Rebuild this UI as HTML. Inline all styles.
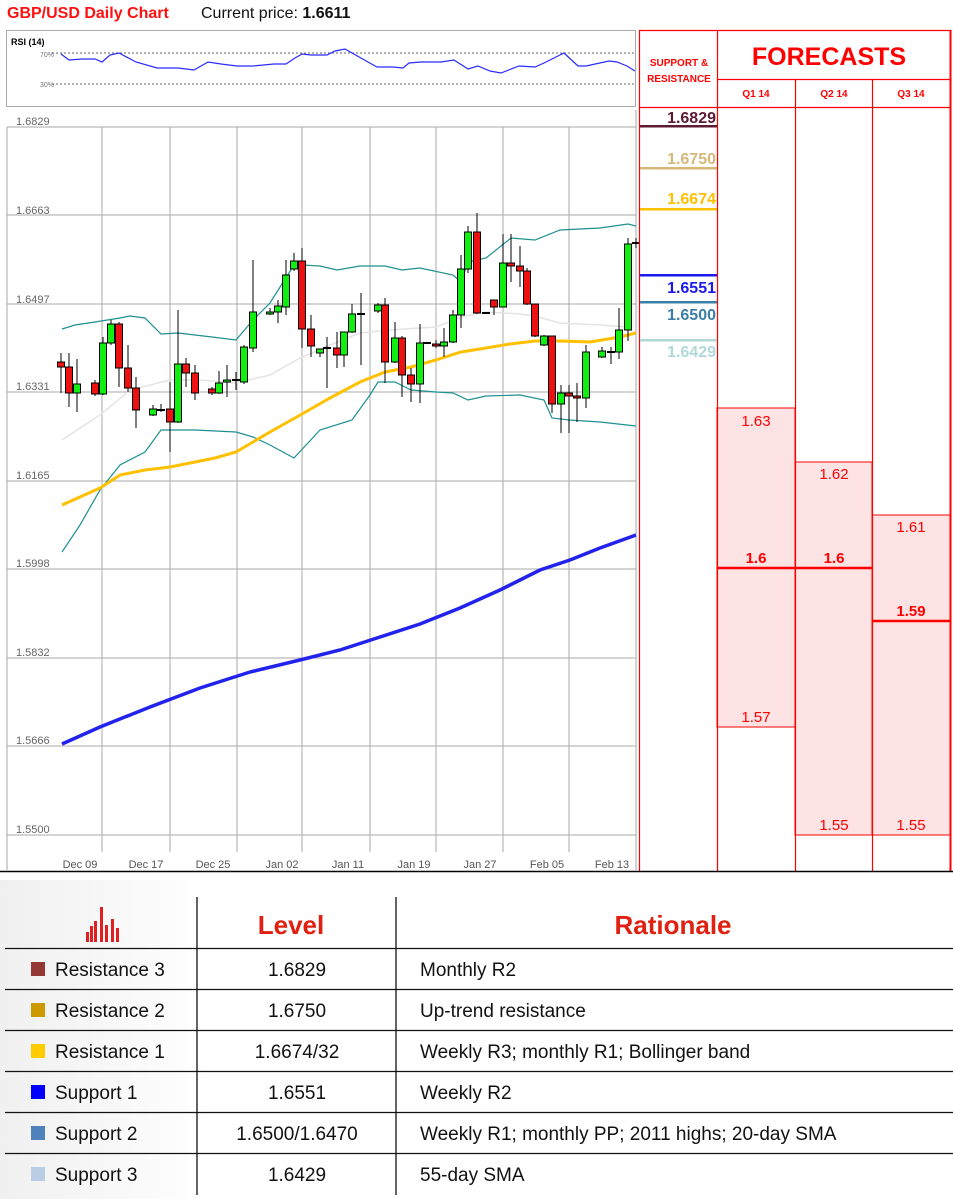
<!DOCTYPE html>
<html><head><meta charset="utf-8"><style>
body{margin:0;width:953px;height:1199px;background:#fff;position:relative;overflow:hidden;font-family:"Liberation Sans",sans-serif}
.a{position:absolute}
</style></head><body>
<div class="a" style="left:7px;top:5px;font-size:16px;font-weight:bold;color:#ff1010">GBP/USD Daily Chart</div>
<div class="a" style="left:201px;top:5px;font-size:16px;color:#111">Current price: <b>1.6611</b></div>

<svg class="a" style="left:0;top:0" width="640" height="880">
<rect x="6.5" y="30.5" width="629" height="76" fill="#fff" stroke="#aaa"/>
<text x="11" y="45" font-size="9" font-weight="bold" font-family="Liberation Sans">RSI (14)</text>
<text x="40" y="57" font-size="7" fill="#777" font-family="Liberation Sans">70%</text>
<text x="40" y="87" font-size="7" fill="#777" font-family="Liberation Sans">30%</text>
<line x1="52" y1="53" x2="635" y2="53" stroke="#666" stroke-dasharray="2,2"/>
<line x1="52" y1="84" x2="635" y2="84" stroke="#666" stroke-dasharray="2,2"/>
<polyline fill="none" stroke="#2a2aff" stroke-width="1.2" points="61,54 69,60 82,59 95,59 102,62 110,55 119,53 136,62 157,68 178,68 194,70 208,62 221,64 237,66 253,66 274,64 286,64 295,58 302,54 311,55 327,55 335,51 345,49 368,62 377,67 386,67 393,67 403,68 409,63 421,62 441,62 454,60 468,69 478,66 490,71 501,73 519,66 535,67 544,63 554,58 564,53 578,66 586,66 609,61 617,62 627,66 635,71"/>
<g font-family="Liberation Sans" font-size="11" fill="#666">
<text x="16" y="125">1.6829</text><text x="16" y="214">1.6663</text><text x="16" y="303">1.6497</text><text x="16" y="390">1.6331</text><text x="16" y="479">1.6165</text><text x="16" y="567">1.5998</text><text x="16" y="656">1.5832</text><text x="16" y="744">1.5666</text><text x="16" y="833">1.5500</text>
</g>
<g stroke="#aaa" stroke-width="1">
<line x1="7" y1="127" x2="636" y2="127"/><line x1="7" y1="215" x2="636" y2="215"/><line x1="7" y1="304" x2="636" y2="304"/><line x1="7" y1="392" x2="636" y2="392"/><line x1="7" y1="481" x2="636" y2="481"/><line x1="7" y1="569" x2="636" y2="569"/><line x1="7" y1="658" x2="636" y2="658"/><line x1="7" y1="746" x2="636" y2="746"/><line x1="7" y1="835" x2="636" y2="835"/>
<line x1="7" y1="127" x2="7" y2="870"/><line x1="636" y1="110" x2="636" y2="870"/>
<line x1="102" y1="127" x2="102" y2="852"/><line x1="170" y1="127" x2="170" y2="852"/><line x1="237" y1="127" x2="237" y2="852"/><line x1="302" y1="127" x2="302" y2="852"/><line x1="370" y1="127" x2="370" y2="852"/><line x1="436" y1="127" x2="436" y2="852"/><line x1="503" y1="127" x2="503" y2="852"/><line x1="569" y1="127" x2="569" y2="852"/>
</g>
<g font-family="Liberation Sans" font-size="11" fill="#555" text-anchor="middle">
<text x="80" y="868">Dec 09</text><text x="146" y="868">Dec 17</text><text x="213" y="868">Dec 25</text><text x="282" y="868">Jan 02</text><text x="348" y="868">Jan 11</text><text x="414" y="868">Jan 19</text><text x="480" y="868">Jan 27</text><text x="547" y="868">Feb 05</text><text x="612" y="868">Feb 13</text>
</g>
<polyline fill="none" stroke="#e4e4e4" stroke-width="1.5" points="62,440 100,415 130,390 170,380 200,380 236,383 270,375 300,358 330,345 360,333 390,330 420,328 436,327 461,317 486,312 520,314 535,316 560,323 600,325 628,327"/>
<polyline fill="none" stroke="#1f9090" stroke-width="1.2" points="62,329 75,325 95,322 120,318 130,316 145,318 161,334 178,333 212,337 236,340 253,320 270,303 294,265 302,265 320,266 337,270 360,266 385,266 402,270 420,268 453,275 461,282 468,262 486,258 511,238 535,240 560,230 600,228 628,224 636,226"/>
<polyline fill="none" stroke="#1f9090" stroke-width="1.2" points="62,552 80,525 100,490 120,465 145,452 161,430 170,430 195,430 236,432 253,437 270,445 294,458 320,430 352,420 370,395 378,382 395,382 411,390 436,392 453,393 468,400 486,396 520,395 544,400 552,418 569,420 600,422 636,426"/>
<polyline fill="none" stroke="#ffc000" stroke-width="3" points="62,505 100,488 120,475 145,470 170,467 195,462 215,458 236,452 253,442 270,432 302,414 330,398 360,382 385,372 411,367 436,360 461,352 486,348 510,344 535,341 560,341 590,342 620,337 636,333"/>
<polyline fill="none" stroke="#2222ee" stroke-width="3.5" points="62,744 100,727 150,707 200,688 250,672 300,660 340,650 380,637 420,624 460,608 500,590 540,570 570,560 600,548 636,535"/>
<g id="c" stroke="#000" stroke-width="1"></g>
</svg>

<svg class="a" style="left:0;top:0" width="953" height="880">
<rect x="795" y="462" width="77" height="373" fill="#fde3e4" stroke="#f00"/>
<rect x="717" y="408" width="78" height="319" fill="#fde3e4" stroke="#f00"/>
<rect x="872" y="515" width="78" height="320" fill="#fde3e4" stroke="#f00"/>
<g stroke="#f00" stroke-width="1.2">
<line x1="639.5" y1="30" x2="639.5" y2="871"/><line x1="717.5" y1="30" x2="717.5" y2="871"/><line x1="795.5" y1="79" x2="795.5" y2="871"/><line x1="872.5" y1="79" x2="872.5" y2="871"/>
<line x1="639" y1="30.5" x2="951" y2="30.5"/><line x1="717" y1="79.5" x2="951" y2="79.5"/><line x1="639" y1="107.5" x2="951" y2="107.5"/>
</g>
<line x1="950.5" y1="30" x2="950.5" y2="871" stroke="#f00" stroke-width="2"/>
<line x1="0" y1="871.5" x2="953" y2="871.5" stroke="#000" stroke-width="1.5"/>
<line x1="717" y1="568" x2="872" y2="568" stroke="#f00" stroke-width="2.5"/>
<line x1="872" y1="621" x2="950" y2="621" stroke="#f00" stroke-width="2.5"/>
<g font-family="Liberation Sans" font-weight="bold" fill="#f00" text-anchor="middle">
<text x="679" y="66" font-size="10">SUPPORT &amp;</text><text x="679" y="82" font-size="10">RESISTANCE</text>
<text x="829" y="65" font-size="25">FORECASTS</text>
<text x="756" y="97" font-size="10">Q1 14</text><text x="834" y="97" font-size="10">Q2 14</text><text x="911" y="97" font-size="10">Q3 14</text>
<text x="756" y="563" font-size="15">1.6</text><text x="834" y="563" font-size="15">1.6</text><text x="911" y="616" font-size="15">1.59</text>
</g>
<g font-family="Liberation Sans" fill="#f00" text-anchor="middle" font-size="15">
<text x="756" y="426">1.63</text><text x="756" y="722">1.57</text><text x="834" y="479">1.62</text><text x="834" y="830">1.55</text><text x="911" y="532">1.61</text><text x="911" y="830">1.55</text>
</g>
<g font-family="Liberation Sans" font-weight="bold" font-size="16" text-anchor="end">
<text x="716" y="123" fill="#5c1a33">1.6829</text><text x="716" y="164" fill="#d6b878">1.6750</text><text x="716" y="204" fill="#ffc000">1.6674</text><text x="716" y="293" fill="#1a1aee">1.6551</text><text x="716" y="320" fill="#3a7fa8">1.6500</text><text x="716" y="357" fill="#b0d8d8">1.6429</text>
</g>
<rect x="640" y="125" width="77" height="2.5" fill="#5c1a33"/>
<rect x="640" y="167" width="77" height="2.5" fill="#d6b878"/>
<rect x="640" y="208" width="77" height="2.5" fill="#ffc000"/>
<rect x="640" y="274" width="77" height="2.5" fill="#1a1aee"/>
<rect x="640" y="301" width="77" height="2.5" fill="#3a7fa8"/>
<rect x="640" y="339" width="77" height="2.5" fill="#b0d8d8"/>
</svg>

<svg class="a" style="left:0;top:880px" width="953" height="319">
<defs><linearGradient id="g" x1="0" x2="1"><stop offset="0" stop-color="#f0f0f0"/><stop offset="0.22" stop-color="#fff"/></linearGradient></defs>
<rect x="0" y="0" width="953" height="319" fill="url(#g)"/>
<g fill="#e02020"><rect x="86" y="52" width="3" height="10"/><rect x="90" y="46" width="3" height="16"/><rect x="94" y="41" width="3" height="21"/><rect x="100" y="27" width="3" height="35"/><rect x="105" y="45" width="3" height="17"/><rect x="111" y="39" width="3" height="23"/><rect x="116" y="48" width="3" height="14"/></g>
<g stroke="#111" stroke-width="1.3"><line x1="197" y1="17" x2="197" y2="315"/><line x1="396" y1="17" x2="396" y2="315"/>
<line x1="5" y1="68.5" x2="953" y2="68.5"/><line x1="5" y1="109.5" x2="953" y2="109.5"/><line x1="5" y1="150.5" x2="953" y2="150.5"/><line x1="5" y1="191.5" x2="953" y2="191.5"/><line x1="5" y1="232.5" x2="953" y2="232.5"/><line x1="5" y1="273.5" x2="953" y2="273.5"/></g>
<g font-family="Liberation Sans" font-weight="bold" font-size="26" fill="#e02010" text-anchor="middle"><text x="291" y="54">Level</text><text x="673" y="54">Rationale</text></g>
<rect x="31" y="82" width="14" height="14" fill="#953735"/>
<rect x="31" y="123" width="14" height="14" fill="#cc9900"/>
<rect x="31" y="164" width="14" height="14" fill="#ffcc00"/>
<rect x="31" y="205" width="14" height="14" fill="#0000ff"/>
<rect x="31" y="246" width="14" height="14" fill="#4f81bd"/>
<rect x="31" y="287" width="14" height="14" fill="#b9cde5"/>
<g font-family="Liberation Sans" font-size="19" fill="#111">
<text x="55" y="96">Resistance 3</text><text x="55" y="137">Resistance 2</text><text x="55" y="178">Resistance 1</text><text x="55" y="219">Support 1</text><text x="55" y="260">Support 2</text><text x="55" y="301">Support 3</text>
<g text-anchor="middle"><text x="297" y="96">1.6829</text><text x="297" y="137">1.6750</text><text x="297" y="178">1.6674/32</text><text x="297" y="219">1.6551</text><text x="297" y="260">1.6500/1.6470</text><text x="297" y="301">1.6429</text></g>
<text x="420" y="96">Monthly R2</text><text x="420" y="137">Up-trend resistance</text><text x="420" y="178">Weekly R3; monthly R1; Bollinger band</text><text x="420" y="219">Weekly R2</text><text x="420" y="260">Weekly R1; monthly PP; 2011 highs; 20-day SMA</text><text x="420" y="301">55-day SMA</text>
</g>
</svg>
<script>
var d=[[61,362,367,353,393,'r'],[69,367,393,353,407,'r'],[77,384,393,359,412,'g'],[95,383,394,380,396,'r'],[103,343,394,337,395,'g'],[111,324,343,320,345,'g'],[119,324,368,322,387,'r'],[128,368,388,345,392,'r'],[136,388,410,377,428,'r'],[153,409,415,405,416,'g'],[161,410,410,404,412,'d'],[170,409,422,382,452,'r'],[178,364,422,310,423,'g'],[186,364,373,358,387,'r'],[195,373,393,365,400,'r'],[212,389,393,387,395,'r'],[219,383,393,371,394,'g'],[227,380,382,365,397,'g'],[236,380,380,372,390,'d'],[244,347,382,345,384,'g'],[253,312,348,260,352,'g'],[270,312,314,308,315,'g'],[278,306,312,300,323,'g'],[286,275,307,260,315,'g'],[294,261,269,253,271,'g'],[302,261,329,248,348,'r'],[311,329,346,315,357,'r'],[320,349,353,349,357,'g'],[327,348,348,337,388,'d'],[337,348,355,332,368,'r'],[344,332,355,332,367,'g'],[352,314,332,304,333,'g'],[361,314,314,293,365,'d'],[378,305,311,303,313,'g'],[385,305,362,298,383,'r'],[395,338,362,322,363,'g'],[402,338,375,336,397,'r'],[411,375,384,368,402,'r'],[420,343,384,324,403,'g'],[427,343,343,342,344,'d'],[436,344,346,340,348,'r'],[444,342,346,328,357,'g'],[453,315,342,310,343,'g'],[461,269,315,255,328,'g'],[468,232,269,226,273,'g'],[477,232,313,213,314,'r'],[486,313,313,312,314,'d'],[494,300,307,300,315,'r'],[503,263,307,234,307,'g'],[511,263,266,234,282,'r'],[520,266,271,246,287,'r'],[527,271,304,268,305,'r'],[535,304,336,304,337,'r'],[544,336,345,335,346,'g'],[552,336,404,336,413,'r'],[561,393,404,385,433,'g'],[569,393,396,385,433,'r'],[577,396,398,383,422,'r'],[586,352,398,345,408,'g'],[602,351,357,347,358,'g'],[611,352,352,347,364,'d'],[619,330,352,308,359,'g'],[628,244,330,238,341,'g'],[636,243,243,238,248,'d']];
var s='';d.forEach(function(c){s+='<line x1="'+c[0]+'" x2="'+c[0]+'" y1="'+c[3]+'" y2="'+c[4]+'"/>';if(c[5]=='d'){s+='<line x1="'+(c[0]-4)+'" x2="'+(c[0]+4)+'" y1="'+c[1]+'" y2="'+c[1]+'" stroke-width="2"/>';}else{s+='<rect x="'+(c[0]-3.5)+'" y="'+c[1]+'" width="7" height="'+Math.max(2,c[2]-c[1])+'" fill="'+(c[5]=='g'?'#11ee11':'#ee1111')+'"/>';}});
document.getElementById('c').innerHTML=s;
</script>
</body></html>
